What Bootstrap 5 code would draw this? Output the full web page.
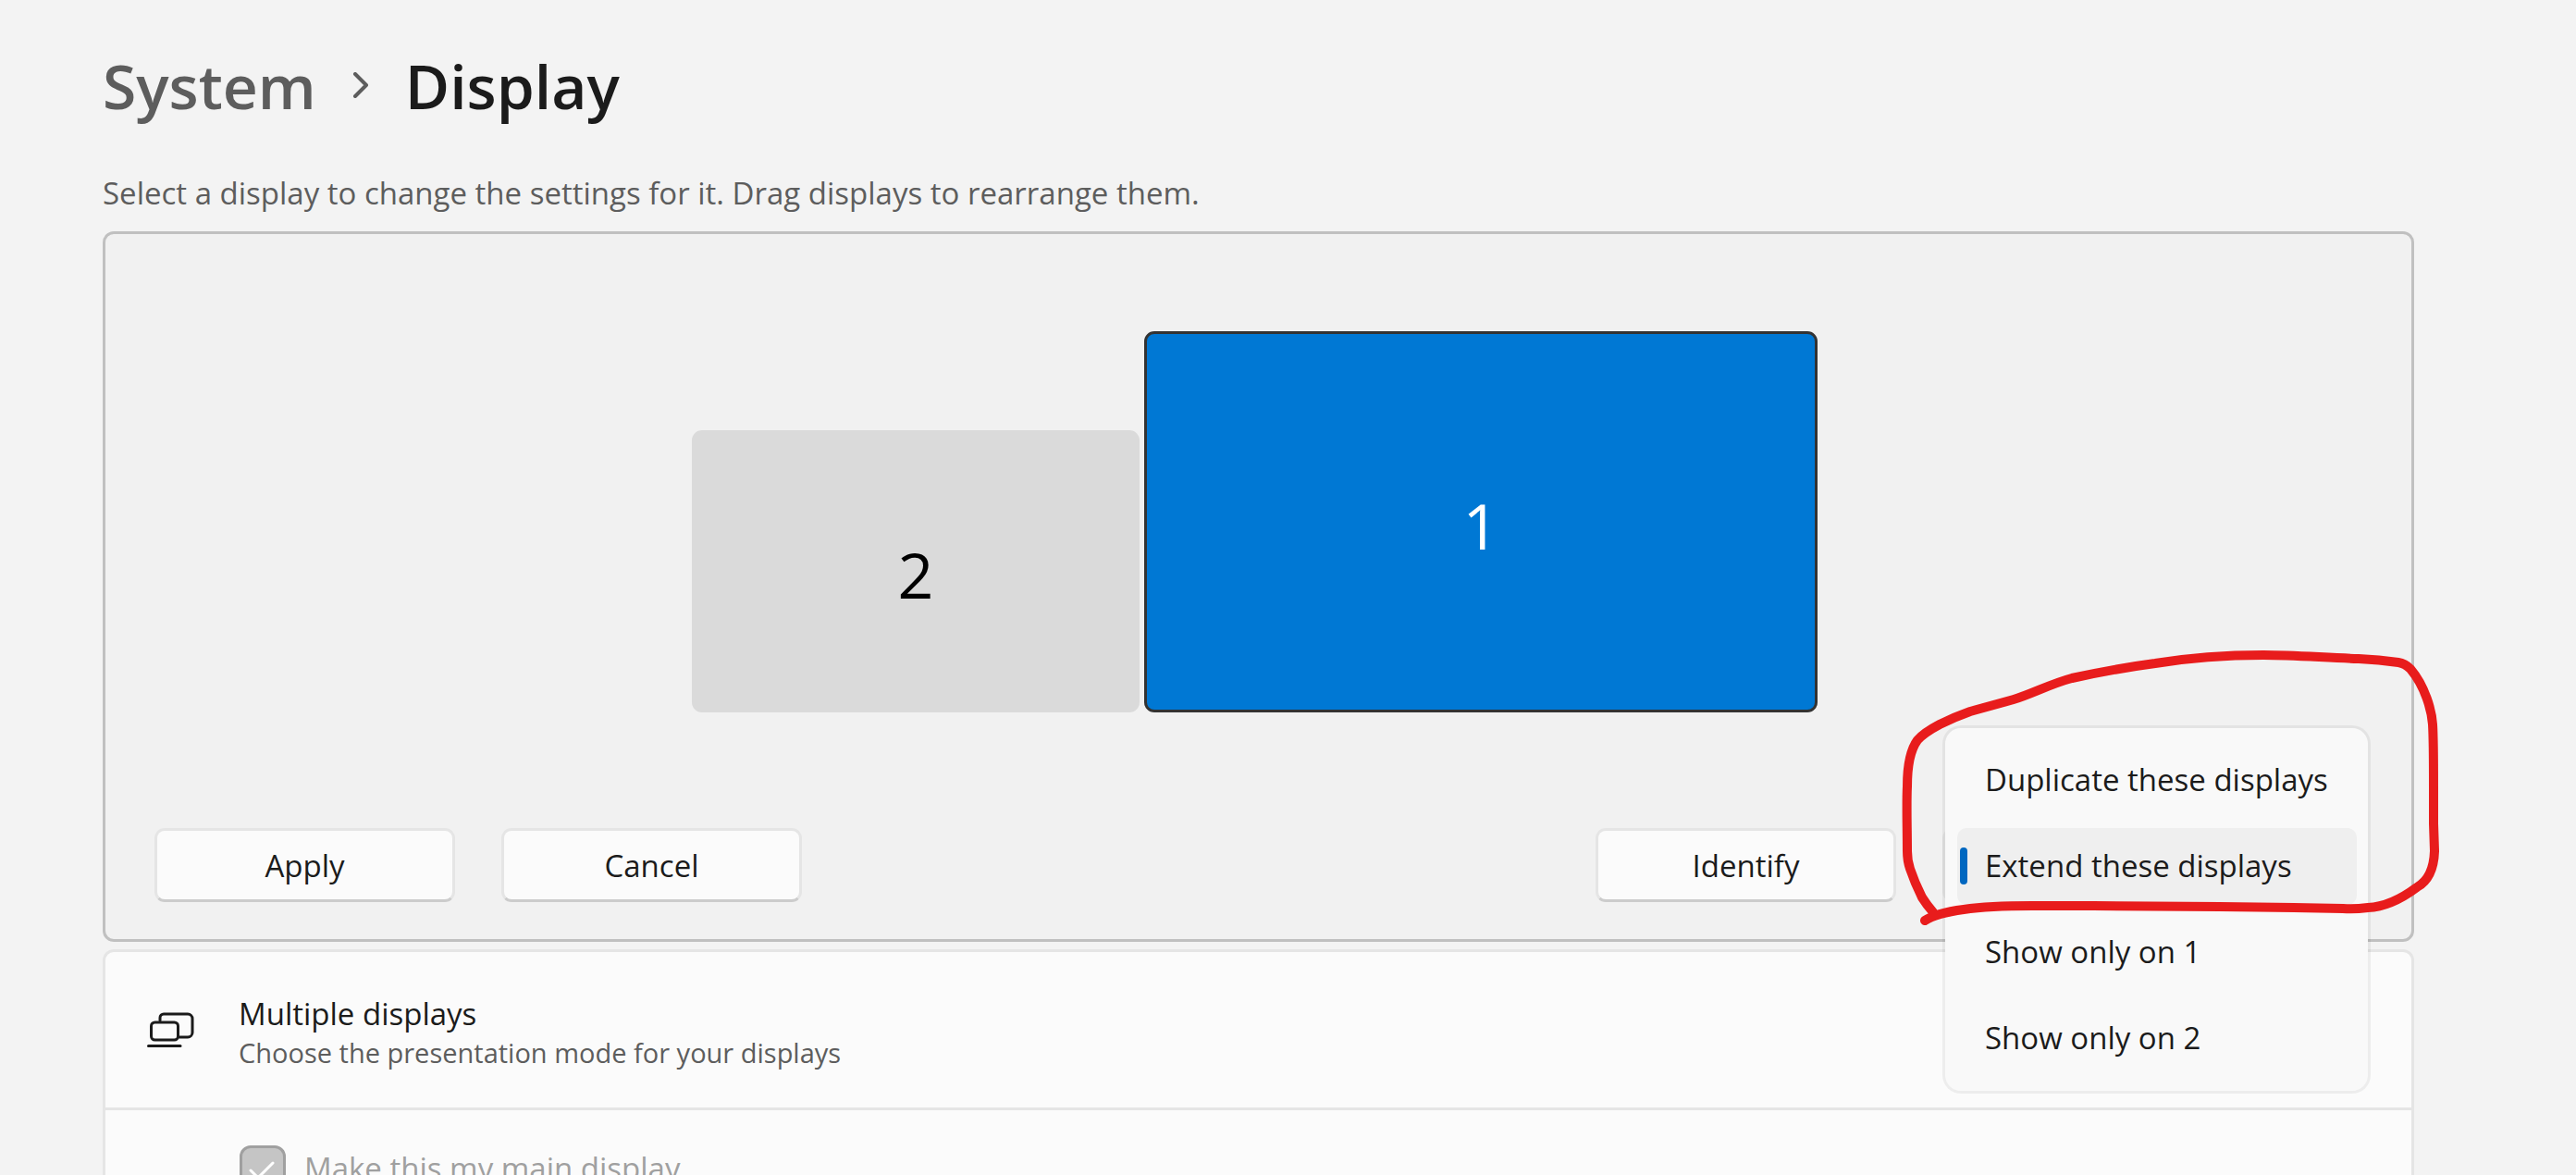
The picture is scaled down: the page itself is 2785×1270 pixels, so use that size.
<!DOCTYPE html>
<html lang="en">
<head>
<meta charset="utf-8">
<meta name="viewport" content="width=device-width, initial-scale=1">
<title>System - Display</title>
<link href="https://cdn.jsdelivr.net/npm/bootstrap@5.3.0/dist/css/bootstrap.min.css" rel="stylesheet">
<style>
  body { background: #f3f3f3; color: #1b1b1b; font-family: "Open Sans", "Noto Sans", sans-serif; font-size: 33px; line-height: 44px; }
  .settings-page { height: 100vh; overflow: hidden; padding: 46px 175px 0 111px; }
  .crumbs { font-size: 66px; line-height: 92px; font-weight: 600; gap: 39px; }
  .crumbs a, .hint { color: #5d5d5d; }
  .crumbs h1, .setting-head h2 { font: inherit; }
  .hint { margin-top: 49px; margin-bottom: 19px; }
  .arrange { background: #f1f1f1; border: 3px solid #c0c0c0; border-radius: 12px; padding: 105px 53px 40px; }
  .monitors { gap: 5px; padding-right: 8px; margin-bottom: 125px; }
  .monitor { border: 0; border-radius: 11px; font-size: 68px; padding: 7px 0 0; }
  .monitor-second { width: 484px; height: 305px; background: #dadada; color: #000; }
  .monitor-main { width: 728px; height: 412px; background: #0078d4; color: #fff; border: 3px solid #333; }
  .actions { gap: 50px; }
  .action-btn { --bs-btn-font-size: 33px; --bs-btn-color: #1b1b1b; --bs-btn-bg: #fbfbfb; --bs-btn-border-width: 3px; --bs-btn-border-radius: 11px; width: 325px; height: 80px; padding: 8px 12px 6px; line-height: 44px; border-color: #e5e5e5 #e5e5e5 #ccc; background: #fbfbfb; }
  .mode { width: 454px; }
  .mode .action-btn { width: 100%; }
  .mode-menu { top: -111px; left: 0; width: 463px; padding: 15px 12px 15px 13px; background: #f9f9f9; background-clip: padding-box; border: 3px solid rgba(0,0,0,.055); border-radius: 20px; z-index: 5; gap: 10px; }
  .mode-item { height: 83px; padding: 0 30px 2px; border-radius: 10px; color: #1b1b1b; }
  .mode-item.selected { background: #efefef; }
  .mode-item.selected::before { content: ""; position: absolute; left: 3px; top: 21px; width: 8px; height: 40px; border-radius: 4px; background: #0067c0; }
  .scribble { left: -50px; top: -205px; z-index: 6; pointer-events: none; }
  .settings-card { margin-top: 8px; background: #fbfbfb; border: 3px solid #e5e5e5; border-radius: 12px 12px 0 0; }
  .setting-head { height: 171px; padding: 0 43px; border-bottom: 3px solid #e5e5e5; }
  .setting-head svg { margin-right: 46px; }
  .setting-text { padding-top: 5px; }
  .setting-head p { font-size: 29px; line-height: 40px; color: #5d5d5d; }
  .setting-row { padding: 38px 43px 38px 145px; gap: 20px; color: #a0a0a0; }
  .main-check { appearance: none; width: 50px; height: 50px; margin: 0; background: #c5c5c5; border: 3px solid #a0a0a0; border-radius: 12px; }
  .check-mark { left: 0; top: 0; pointer-events: none; }
</style>
</head>
<body>
<main class="settings-page">
  <nav class="crumbs d-flex align-items-center" aria-label="Breadcrumb">
    <a href="#" class="text-decoration-none">System</a>
    <svg width="18" height="28" viewBox="0 0 18 28" fill="none" stroke="#5d5d5d" stroke-width="4" stroke-linecap="round" stroke-linejoin="round" aria-hidden="true"><path d="M3 2l12 12L3 26"/></svg>
    <h1 class="m-0">Display</h1>
  </nav>
  <p class="hint">Select a display to change the settings for it. Drag displays to rearrange them.</p>

  <section class="arrange">
    <div class="monitors d-flex justify-content-center align-items-end">
      <button type="button" class="monitor monitor-second">2</button>
      <button type="button" class="monitor monitor-main">1</button>
    </div>
    <div class="actions d-flex">
      <button type="button" class="btn action-btn">Apply</button>
      <button type="button" class="btn action-btn">Cancel</button>
      <button type="button" class="btn action-btn ms-auto">Identify</button>
      <div class="mode position-relative">
        <button type="button" class="btn action-btn" aria-haspopup="true" aria-expanded="true" aria-label="Presentation mode"></button>
        <div class="mode-menu position-absolute d-flex flex-column">
          <button type="button" class="dropdown-item mode-item">Duplicate these displays</button>
          <button type="button" class="dropdown-item mode-item selected position-relative">Extend these displays</button>
          <button type="button" class="dropdown-item mode-item">Show only on 1</button>
          <button type="button" class="dropdown-item mode-item">Show only on 2</button>
        </div>
        <svg class="scribble position-absolute" width="600" height="320" viewBox="2050 690 600 320" fill="none" stroke="#e81c1c" stroke-width="10" stroke-linecap="round" stroke-linejoin="round" aria-hidden="true">
          <path d="M2090 986Q2083 978 2078 970Q2070 954 2065 939Q2062 930 2062 920C2062 895 2061 870 2062 850Q2062 815 2073 800Q2080 792 2097 783Q2113 775 2130 769L2177 756C2197 750 2217 739 2240 733Q2285 723 2330 717Q2385 708 2447 708C2480 708 2515 711 2550 712Q2572 713 2593 716Q2600 717 2606 723C2622 742 2629 768 2630 783C2631 800 2631 817 2631 850L2631 890L2632 920Q2631 949 2613 959Q2585 980 2560 981Q2545 983 2533 982L2480 981L2400 980L2263 979L2197 979Q2150 979 2123 983Q2093 987 2081 995"/>
        </svg>
      </div>
    </div>
  </section>

  <section class="settings-card">
    <div class="setting-head d-flex align-items-center">
      <svg width="55" height="44" viewBox="157 1091 55 44" fill="none" stroke="#1b1b1b" stroke-width="3" stroke-linecap="round" stroke-linejoin="round" aria-hidden="true"><path d="M173 1103v-3a4 4 0 0 1 4-4h26a5 5 0 0 1 5 5v15a5 5 0 0 1-5 5h-9"/><rect x="163.500" y="1105" width="29" height="19" rx="4"/><path d="M160.500 1130.500h34.500"/></svg>
      <div class="setting-text flex-grow-1">
        <h2 class="m-0">Multiple displays</h2>
        <p class="m-0">Choose the presentation mode for your displays</p>
      </div>
    </div>
    <div class="setting-row d-flex align-items-center">
      <div class="position-relative d-flex">
        <input type="checkbox" class="main-check" id="main-display" checked disabled>
        <svg class="check-mark position-absolute" width="50" height="50" viewBox="0 0 50 50" fill="none" stroke="#fff" stroke-width="3" stroke-linecap="round" stroke-linejoin="round" aria-hidden="true"><path d="M12 27l8 8 16-16"/></svg>
      </div>
      <label for="main-display">Make this my main display</label>
    </div>
  </section>
</main>
<script src="https://cdn.jsdelivr.net/npm/bootstrap@5.3.0/dist/js/bootstrap.bundle.min.js"></script>
</body>
</html>
